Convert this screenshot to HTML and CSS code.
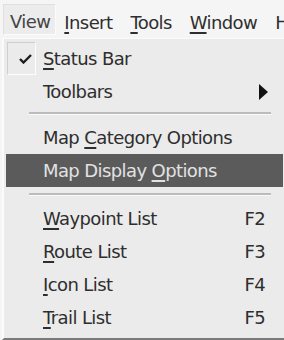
FILE: index.html
```html
<!DOCTYPE html>
<html lang="en">

<head>
    <meta charset="UTF-8">
    <title>View Menu</title>
    <link rel="stylesheet" href="styles.css">
</head>

<body>
    <!-- Menu bar -->
    <div class="menubar">
        <div class="menubar-item pressed">View</div>
        <div class="menubar-item"><u>I</u>nsert</div>
        <div class="menubar-item"><u>T</u>ools</div>
        <div class="menubar-item"><u>W</u>indow</div>
        <div class="menubar-item">H</div>
    </div>

    <!-- Dropdown -->
    <div class="dropdown">
        <div class="menu-row checked">
            <div class="check-box">
                <svg width="13" height="10" viewBox="0 0 13 10">
                    <path d="M1 5 L4.5 8.5 L12 1" fill="none" stroke="#1e1e1e" stroke-width="2.4"/>
                </svg>
            </div>
            <div class="label"><u>S</u>tatus Bar</div>
        </div>
        <div class="menu-row">
            <div class="label">Toolbars</div>
            <div class="arrow"></div>
        </div>

        <div class="separator first"></div>

        <div class="menu-row">
            <div class="label">Map <u>C</u>ategory Options</div>
        </div>
        <div class="menu-row active">
            <div class="label">Map Display <u>O</u>ptions</div>
        </div>

        <div class="separator second"></div>

        <div class="menu-row">
            <div class="label"><u>W</u>aypoint List</div>
            <div class="shortcut">F2</div>
        </div>
        <div class="menu-row">
            <div class="label"><u>R</u>oute List</div>
            <div class="shortcut">F3</div>
        </div>
        <div class="menu-row">
            <div class="label"><u>I</u>con List</div>
            <div class="shortcut">F4</div>
        </div>
        <div class="menu-row">
            <div class="label"><u>T</u>rail List</div>
            <div class="shortcut">F5</div>
        </div>
    </div>
</body>

</html>
```

FILE: styles.css
```css
body {
    margin: 0;
    background-color: #f5f5f5;
    font-family: "DejaVu Sans", Verdana, sans-serif;
    font-size: 18px;
    letter-spacing: -0.6px;
    color: #2e2e2e;
    width: 284px;
    height: 340px;
    overflow: hidden;
}

u {
    text-decoration-thickness: 2px;
    text-underline-offset: 3px;
}

.menubar {
    display: flex;
    align-items: flex-start;
    height: 38px;
    padding-left: 3px;
    white-space: nowrap;
}

.menubar-item {
    height: 31px;
    line-height: 31px;
    padding: 3px 10px 0 8px;
    margin-top: 4px;
    box-sizing: border-box;
}

.pressed {
    background-color: #ececec;
    border: 1px solid #fafafa;
    border-color: #e0e0e0 #fbfbfb #fbfbfb #e0e0e0;
    color: #444;
    padding: 2px 5px 0 6px;
    line-height: 29px;
}

.dropdown {
    margin-left: 2px;
    width: 278px;
    height: 296px;
    background-color: #ebebeb;
    border-top: 1px solid #fafafa;
    border-left: 2px solid #fbfbfb;
    border-right: 1px solid #b8b8b8;
    border-bottom: 2px solid #7a7a7a;
    padding: 3px 0 0 2px;
}

.menu-row {
    display: flex;
    align-items: center;
    height: 33px;
    padding-left: 37px;
    padding-right: 16px;
    position: relative;
}

.label {
    flex: 1;
}

.check-box {
    position: absolute;
    left: 1px;
    top: 0;
    width: 29px;
    height: 33px;
    border: 1px solid #fdfdfd;
    border-color: #cfcfcf #fdfdfd #fdfdfd #cfcfcf;
    display: flex;
    align-items: center;
    padding-left: 11px;
    box-sizing: border-box;
}

.arrow {
    width: 0;
    height: 0;
    border-top: 8px solid transparent;
    border-bottom: 8px solid transparent;
    border-left: 9px solid #111;
}

.active {
    background-color: #5b5b5b;
    color: #e2e2e2;
    margin-right: 1px;
}

.separator {
    margin: 0 13px 0 23px;
    border-top: 2px solid #bcbcbc;
    border-bottom: 1px solid #fafafa;
}

.separator.first {
    margin-top: 4px;
    margin-bottom: 6px;
}

.separator.second {
    margin-top: 6px;
    margin-bottom: 6px;
}

.shortcut {
    text-align: right;
    margin-right: 3px;
}
```
